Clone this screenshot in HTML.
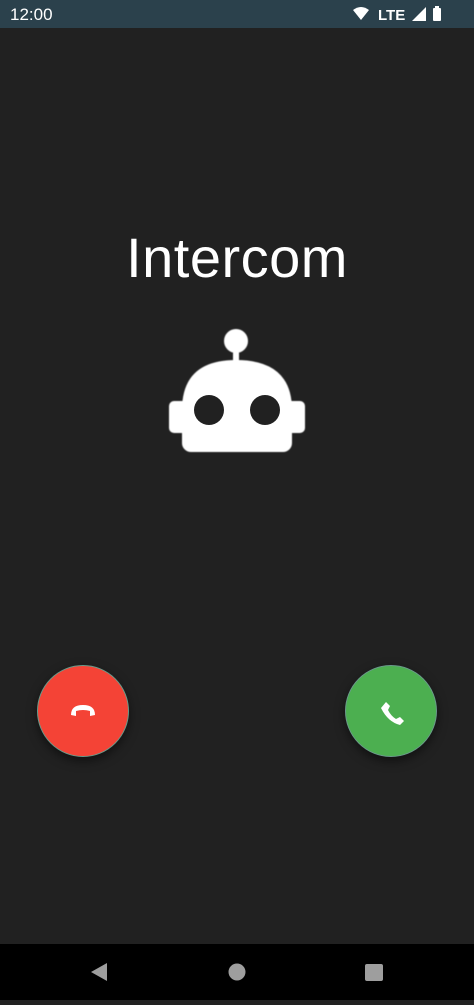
<!DOCTYPE html>
<html><head><meta charset="utf-8"><style>
html,body{margin:0;padding:0;width:474px;height:1000px;overflow:hidden;background:#212121;font-family:"Liberation Sans",sans-serif}
.sb{position:absolute;left:0;top:0;width:474px;height:28px;background:#2b414c;color:#fff}
.sb .t{position:absolute;left:10px;top:5px;font-size:17px}
.nav{position:absolute;left:0;top:944px;width:474px;height:56px;background:#000}
h1{position:absolute;top:225px;left:0;width:474px;text-align:center;margin:0;font-weight:normal;color:#fff;font-size:56px;letter-spacing:0.5px}
.btn{position:absolute;top:665px;width:92px;height:92px;border-radius:50%;box-shadow:0 4px 10px rgba(0,0,0,.5);border:1px solid #6a9a8a;box-sizing:border-box}
</style></head><body>
<div class="sb"><span class="t">12:00</span>
<svg style="position:absolute;left:352px;top:5px" width="100" height="18" viewBox="0 0 100 18">
<path d="M1 5 Q9 -1 17 5 L9 15 Z" fill="#fff"/>
<text x="26" y="15" fill="#fff" font-family="Liberation Sans" font-weight="bold" font-size="15">LTE</text>
<path d="M60 16 L74 16 L74 2 Z" fill="#fff"/>
<rect x="81" y="3" width="8" height="13" rx="1" fill="#fff"/><rect x="83" y="1" width="4" height="3" fill="#fff"/>
</svg></div>
<h1>Intercom</h1>
<svg style="position:absolute;left:0;top:0" width="474" height="1000">
<g fill="#fff" filter="url(#b)">
<circle cx="236" cy="341" r="12"/>
<rect x="233" y="345" width="6" height="20"/>
<path d="M182 420 L182 410 Q182 360 236 360 Q292 360 292 410 L292 420 Z"/>
<rect x="182" y="395" width="110" height="57" rx="9"/>
<rect x="169" y="401" width="20" height="32" rx="5"/>
<rect x="285" y="401" width="20" height="32" rx="5"/>
</g>
<g fill="#212121"><circle cx="209" cy="410" r="15"/><circle cx="265" cy="410" r="15"/></g>
<defs><filter id="b"><feGaussianBlur stdDeviation="0.6"/></filter></defs>
</svg>
<div class="btn" style="left:37px;background:#f44336"></div>
<div class="btn" style="left:345px;background:#4caf50"></div>
<svg style="position:absolute;left:0;top:0" width="474" height="1000">
<path d="M71 715 Q71 705 83 705 Q95 705 95 715 L90 716 L90 711 Q83 709 76 711 L76 716 Z" fill="#fff"/>
<path d="M386 702 L390 706 L388 710 Q391 716 396 719 L400 717 L404 721 L400 725 Q388 722 381 708 Z" fill="#fff"/>
</svg>
<div class="nav">
<svg width="474" height="56">
<path d="M107 19 L107 37 L91 28 Z" fill="#9e9e9e"/>
<circle cx="237" cy="28" r="8.5" fill="#9e9e9e"/>
<rect x="365" y="20" width="18" height="17" rx="2" fill="#9e9e9e"/>
</svg></div>
</body></html>
